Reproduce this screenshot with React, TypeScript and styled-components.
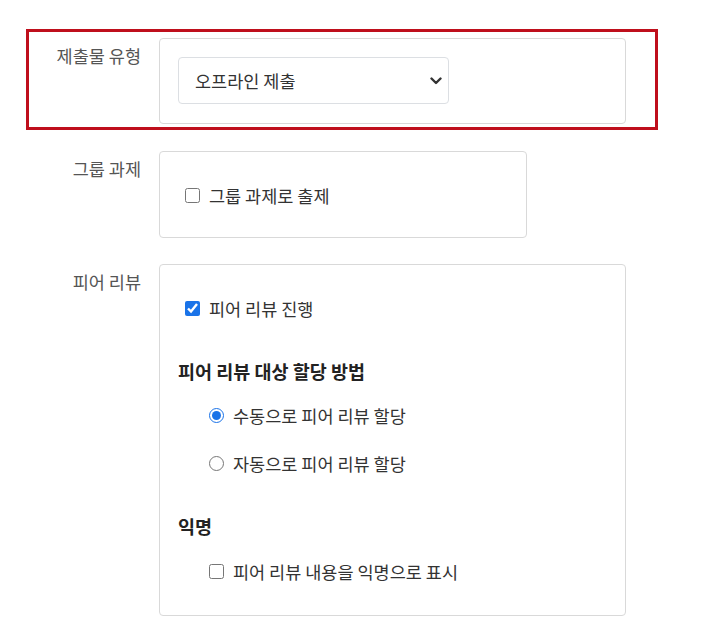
import React, { useState } from 'react';
import styled, { createGlobalStyle } from 'styled-components';

const GlobalStyle = createGlobalStyle`
  body {
    margin: 0;
    background: #ffffff;
    font-family: "Noto Sans CJK KR", "Noto Sans", sans-serif;
    color: #333333;
  }
`;

const Page = styled.div`
  width: 703px;
  height: 642px;
  padding-top: 29px;
  box-sizing: border-box;
  overflow: hidden;
`;

const Highlight = styled.div`
  width: 632px;
  margin-left: 26px;
  border: 3px solid #bf0f1c;
  padding: 6px 0 3px 0;
  box-sizing: border-box;
`;

const Row = styled.div<{ $gap: number; $labelWidth: number }>`
  display: flex;
  gap: 18px;
  margin-top: ${(p) => p.$gap}px;
  padding-left: ${(p) => 141 - p.$labelWidth}px;
`;

const Label = styled.div<{ $width: number }>`
  width: ${(p) => p.$width}px;
  flex-shrink: 0;
  text-align: right;
  font-size: 17.5px;
  line-height: 24px;
  padding-top: 6px;
  color: #555555;
  white-space: nowrap;
`;

const Panel = styled.div<{ $width: number; $pb?: number }>`
  width: ${(p) => p.$width}px;
  box-sizing: border-box;
  border: 1px solid #d9d9d9;
  border-radius: 4px;
  padding: 18px 18px ${(p) => p.$pb ?? 18}px 18px;
  display: flex;
  flex-direction: column;
`;

const SelectWrap = styled.div`
  position: relative;
  width: 271px;
  height: 47px;
  flex-shrink: 0;
`;

const Select = styled.select`
  appearance: none;
  width: 100%;
  height: 100%;
  border: 1px solid #dcdfe3;
  border-radius: 4px;
  background: #ffffff;
  padding: 0 30px 0 16px;
  font-family: inherit;
  font-size: 17.5px;
  color: #333333;
`;

const Chevron = styled.svg`
  position: absolute;
  right: 7px;
  top: 20px;
  pointer-events: none;
`;

const OptionRow = styled.label<{ $indent: number; $height: number; $mt?: number }>`
  display: flex;
  align-items: center;
  gap: 9px;
  height: ${(p) => p.$height}px;
  margin-top: ${(p) => p.$mt ?? 0}px;
  padding-left: ${(p) => p.$indent}px;
  font-size: 17.5px;
  color: #333333;
  white-space: nowrap;
`;

const Check = styled.input`
  width: 15px;
  height: 15px;
  margin: 0;
  flex-shrink: 0;
  accent-color: #1a73e8;
`;

const Heading = styled.div<{ $mt: number }>`
  margin-top: ${(p) => p.$mt}px;
  font-size: 18.5px;
  font-weight: 700;
  line-height: 26px;
  color: #222222;
`;

const RadioGroup = styled.div`
  margin-top: 7px;
  display: flex;
  flex-direction: column;
`;

export default function App() {
  const [type, setType] = useState('offline');
  const [group, setGroup] = useState(false);
  const [peer, setPeer] = useState(true);
  const [mode, setMode] = useState('manual');
  const [anon, setAnon] = useState(false);

  return (
    <Page>
      <GlobalStyle />
      <Highlight>
        <Row $gap={0} $labelWidth={112} style={{ paddingLeft: 0 }}>
          <Label $width={112}>제출물 유형</Label>
          <Panel $width={467} $pb={19}>
            <SelectWrap>
              <Select value={type} onChange={(e) => setType(e.target.value)}>
                <option value="offline">오프라인 제출</option>
                <option value="online">온라인 제출</option>
              </Select>
              <Chevron width="12" height="8" viewBox="0 0 12 8">
                <path d="M1.5 1.5 L6 6 L10.5 1.5" fill="none" stroke="#333" strokeWidth="2.4" strokeLinecap="round" strokeLinejoin="round" />
              </Chevron>
            </SelectWrap>
          </Panel>
        </Row>
      </Highlight>

      <Row $gap={21} $labelWidth={141}>
        <Label $width={141}>그룹 과제</Label>
        <Panel $width={368} $pb={17}>
          <OptionRow $indent={7} $height={50}>
            <Check type="checkbox" checked={group} onChange={() => setGroup(!group)} />
            그룹 과제로 출제
          </OptionRow>
        </Panel>
      </Row>

      <Row $gap={26} $labelWidth={141}>
        <Label $width={141}>피어 리뷰</Label>
        <Panel $width={467} $pb={20}>
          <OptionRow $indent={7} $height={50}>
            <Check type="checkbox" checked={peer} onChange={() => setPeer(!peer)} />
            피어 리뷰 진행
          </OptionRow>
          <Heading $mt={25}>피어 리뷰 대상 할당 방법</Heading>
          <RadioGroup>
            <OptionRow $indent={31} $height={48}>
              <Check type="radio" name="assign" checked={mode === 'manual'} onChange={() => setMode('manual')} />
              수동으로 피어 리뷰 할당
            </OptionRow>
            <OptionRow $indent={31} $height={48}>
              <Check type="radio" name="assign" checked={mode === 'auto'} onChange={() => setMode('auto')} />
              자동으로 피어 리뷰 할당
            </OptionRow>
          </RadioGroup>
          <Heading $mt={26}>익명</Heading>
          <OptionRow $indent={31} $height={48} $mt={8}>
            <Check type="checkbox" checked={anon} onChange={() => setAnon(!anon)} />
            피어 리뷰 내용을 익명으로 표시
          </OptionRow>
        </Panel>
      </Row>
    </Page>
  );
}
